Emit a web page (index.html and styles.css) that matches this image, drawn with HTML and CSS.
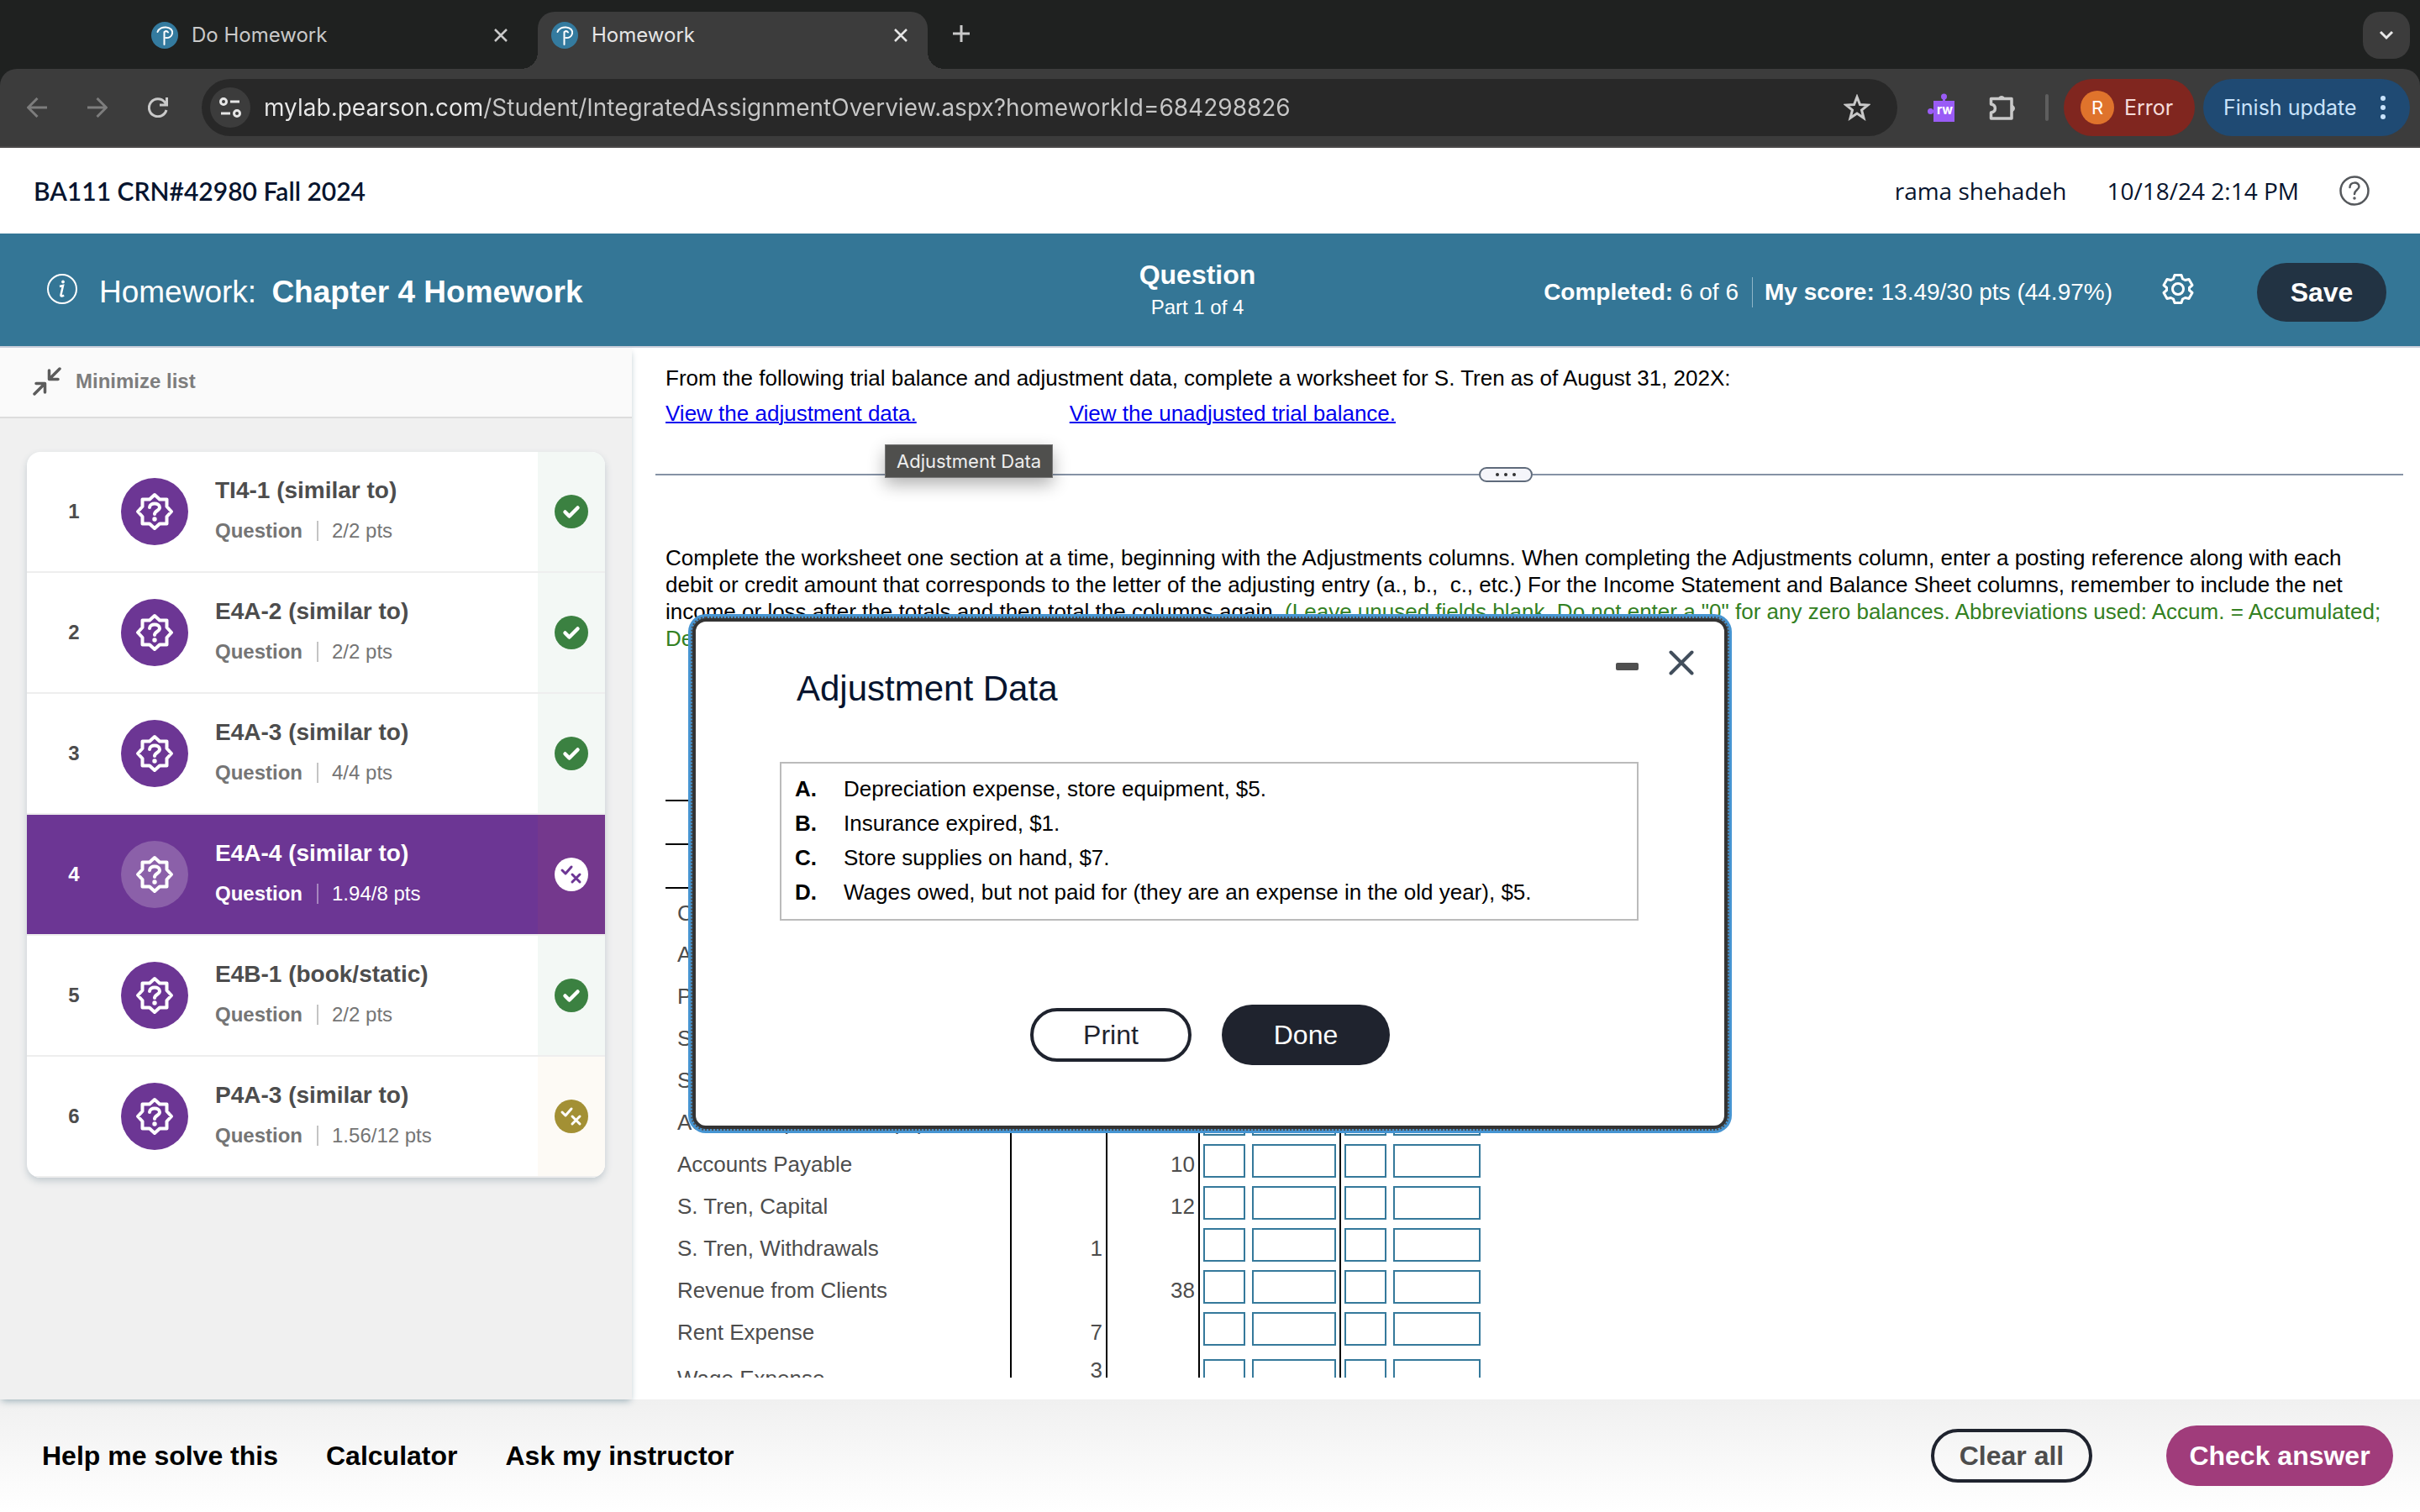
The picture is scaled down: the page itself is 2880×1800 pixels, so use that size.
FILE: index.html
```html
<!DOCTYPE html>
<html lang="en">
<head>
    <meta charset="UTF-8">
    <meta name="viewport" content="width=device-width, initial-scale=1.0">
    <title>Homework</title>
    <link rel="stylesheet" href="styles.css">
</head>
<body>

    <!-- Shared icons -->
    <svg class="sprite" aria-hidden="true">
        <symbol id="pearson" viewBox="0 0 32 32">
            <circle cx="16" cy="16" r="16" fill="#347b9f"/>
            <path d="M7.500 12C9 7.500 14 6 18 6.500C23 7 26 10 25 14C24 18 20.500 19.500 17.500 19M15.500 12V27M15.500 12C17 11 19 11 20 12.500" fill="none" stroke="#fff" stroke-width="2" stroke-linecap="round"/>
        </symbol>
        <symbol id="cross" viewBox="0 0 16 16">
            <path d="M1 1L15 15M15 1L1 15" fill="none" stroke="currentColor" stroke-width="2.500"/>
        </symbol>
        <symbol id="badge" viewBox="-24 -24 48 48">
            <path d="M0 -20L6 -14.500H14.500V-6L20 0L14.500 6V14.500H6L0 20L-6 14.500H-14.500V6L-20 0L-14.500 -6V-14.500H-6Z" fill="none" stroke="#fff" stroke-width="4" stroke-linejoin="round"/>
            <path d="M-6 -5C-6 -11 6 -11 6 -5C6 -1 0 -1 0 3" fill="none" stroke="#fff" stroke-width="4" stroke-linecap="round"/>
            <circle cx="0" cy="9" r="2.700" fill="#fff"/>
        </symbol>
        <symbol id="right" viewBox="0 0 40 40">
            <circle cx="20" cy="20" r="20" fill="#3b8141"/>
            <path d="M12.500 20.500L17.500 25.500L27.500 15.500" fill="none" stroke="#fff" stroke-width="4.500" stroke-linecap="round" stroke-linejoin="round"/>
        </symbol>
        <symbol id="partial" viewBox="0 0 40 40">
            <circle cx="20" cy="20" r="20" fill="var(--disc)"/>
            <path d="M9 15L13 19L20 11M21 20L30 29M30 20L21 29" fill="none" stroke="var(--mark)" stroke-width="3" stroke-linecap="round" stroke-linejoin="round"/>
        </symbol>
    </svg>

    <div class="browser">
        <!-- Browser tabs -->
        <div class="tabs">
            <div class="tab">
                <svg class="favicon"><use href="#pearson"/></svg>
                <span>Do Homework</span>
                <button class="icon-btn" aria-label="Close tab"><svg class="i16"><use href="#cross"/></svg></button>
            </div>
            <div class="tab active">
                <svg class="favicon"><use href="#pearson"/></svg>
                <span>Homework</span>
                <button class="icon-btn" aria-label="Close tab"><svg class="i16"><use href="#cross"/></svg></button>
            </div>
            <button class="icon-btn new-tab" aria-label="New tab">
                <svg width="22" height="22" viewBox="0 0 22 22"><path d="M11 1V21M1 11H21" stroke="#c9c9c9" stroke-width="3"/></svg>
            </button>
            <button class="icon-btn tab-search" aria-label="Search tabs">
                <svg width="18" height="12" viewBox="0 0 18 12"><path d="M2 2L9 9L16 2" fill="none" stroke="#e8e8e8" stroke-width="3"/></svg>
            </button>
        </div>

        <!-- Address bar -->
        <div class="toolbar">
            <button class="icon-btn dim" aria-label="Back">
                <svg width="24" height="24" viewBox="0 0 24 24"><path d="M24 12H2M12.500 1L1.500 12L12.500 23" fill="none" stroke="currentColor" stroke-width="3"/></svg>
            </button>
            <button class="icon-btn dim" aria-label="Forward">
                <svg width="24" height="24" viewBox="0 0 24 24"><path d="M0 12H22M11.500 1L22.500 12L11.500 23" fill="none" stroke="currentColor" stroke-width="3"/></svg>
            </button>
            <button class="icon-btn" aria-label="Reload">
                <svg width="24" height="24" viewBox="0 0 24 24"><path d="M22 15A10.500 10.500 0 1 1 20 5.500L22.500 8.500M22.500 0V9H14" fill="none" stroke="currentColor" stroke-width="3"/></svg>
            </button>
            <div class="address">
                <button class="icon-btn site-info" aria-label="Site information">
                    <svg width="26" height="24" viewBox="0 0 26 24" fill="none" stroke="currentColor" stroke-width="3"><circle cx="5" cy="5" r="3.500"/><path d="M13 5H24M2 19H13"/><circle cx="21" cy="19" r="3.500"/></svg>
                </button>
                <input type="text" class="url" aria-label="Address" value="mylab.pearson.com/Student/IntegratedAssignmentOverview.aspx?homeworkId=684298826">
                <button class="icon-btn" aria-label="Bookmark">
                    <svg width="32" height="32" viewBox="0 0 32 32"><path d="M16 3.500L19.500 12.500L29 13L21.500 19L24 28.500L16 23L8 28.500L10.500 19L3 13L12.500 12.500Z" fill="none" stroke="currentColor" stroke-width="3"/></svg>
                </button>
            </div>
            <button class="icon-btn ext-rw" aria-label="Read and write">
                <svg width="32" height="34" viewBox="0 0 32 34"><rect x="7" y="9" width="25" height="25" fill="#9a5cf6"/><circle cx="19.500" cy="4" r="3.500" fill="#9a5cf6"/><path d="M18 5H21V10H18ZM3 20H8V23H3Z" fill="#9a5cf6"/><circle cx="3.500" cy="21.500" r="3.500" fill="#9a5cf6"/><text x="11" y="25" class="rw">rw</text></svg>
            </button>
            <button class="icon-btn" aria-label="Extensions">
                <svg width="34" height="34" viewBox="0 0 34 34"><path d="M3.500 6.500H28V30H3.500V23C10 22 10 14 3.500 13Z" fill="none" stroke="currentColor" stroke-width="3.500" stroke-linejoin="round"/><path d="M12 6A4.500 4.500 0 0 1 20 6ZM29 14A4.500 4.500 0 0 1 29 22Z" fill="currentColor" stroke="currentColor"/></svg>
            </button>
            <span class="divider"></span>
            <button class="pill error"><span class="avatar">R</span>Error</button>
            <button class="pill update">Finish update
                <svg width="6" height="28" viewBox="0 0 6 28" fill="currentColor"><circle cx="3" cy="3" r="3"/><circle cx="3" cy="14" r="3"/><circle cx="3" cy="25" r="3"/></svg>
            </button>
        </div>
    </div>

    <!-- Course header -->
    <header class="course">
        <span class="course-name">BA111 CRN#42980 Fall 2024</span>
        <span class="user">rama shehadeh</span>
        <span>10/18/24 2:14 PM</span>
        <button class="icon-btn" aria-label="Help">
            <svg width="36" height="36" viewBox="0 0 36 36" fill="none" stroke="#55585c" stroke-width="2.500"><circle cx="18" cy="18" r="16.500"/><path d="M12.500 14C12.500 7 23.500 7 23.500 13C23.500 17 18 17 18 22" stroke-linecap="round"/><circle cx="18" cy="27" r="1" stroke-width="1.500"/></svg>
        </button>
    </header>

    <!-- Assignment bar -->
    <section class="assignment">
        <div class="assignment-title">
            <svg width="36" height="36" viewBox="0 0 36 36" fill="none" stroke="#fff" stroke-width="2"><circle cx="18" cy="18" r="17"/><path d="M15 15L19 14L16.500 25C16 27 18 27 20 25.500" stroke-width="2.500"/><circle cx="19" cy="9.500" r="1.500" fill="#fff" stroke-width="1"/></svg>
            <h1><span>Homework:</span> Chapter 4 Homework</h1>
        </div>
        <div class="part">
            <h2>Question</h2>
            <p>Part 1 of 4</p>
        </div>
        <div class="scores">
            <p><b>Completed:</b> 6 of 6</p>
            <p class="my-score"><b>My score:</b> 13.49/30 pts (44.97%)</p>
            <button class="icon-btn" aria-label="Settings">
                <svg width="38" height="38" viewBox="-19 -19 38 38" fill="none" stroke="#fff" stroke-width="3" stroke-linejoin="round"><path d="M-4 -16.500H4L5.500 -12L8.500 -10.500L13 -11.500L17 -4.500L13.500 -1.500V1.500L17 4.500L13 11.500L8.500 10.500L5.500 12L4 16.500H-4L-5.500 12L-8.500 10.500L-13 11.500L-17 4.500L-13.500 1.500V-1.500L-17 -4.500L-13 -11.500L-8.500 -10.500L-5.500 -12Z"/><circle r="6.500"/></svg>
            </button>
            <button class="save">Save</button>
        </div>
    </section>

    <main class="workspace">
        <aside class="sidebar">
            <button class="minimize">
                <svg width="34" height="34" viewBox="0 0 34 34" fill="none" stroke="#5c5c5c" stroke-width="3.500" stroke-linecap="round" stroke-linejoin="round"><path d="M32 2L20 14M19.500 4V14.500H30M2 32L14 20M4 19.500H14.500V30"/></svg>
                Minimize list
            </button>
            <ol class="questions" id="questions"></ol>
        </aside>

        <section class="content">
            <p>From the following trial balance and adjustment data, complete a worksheet for S. Tren as of August 31, 202X:</p>
            <div class="links">
                <a href="#">View the adjustment data.</a>
                <a href="#">View the unadjusted trial balance.</a>
                <span class="tooltip" role="tooltip">Adjustment Data</span>
            </div>
            <div class="splitter">
                <button aria-label="Resize"><i></i><i></i><i></i></button>
            </div>
            <div class="question-body">
                <p>Complete the worksheet one section at a time, beginning with the Adjustments columns. When completing the Adjustments column, enter a posting reference along with each debit or credit amount that corresponds to the letter of the adjusting entry (a., b.,&nbsp; c., etc.) For the Income Statement and Balance Sheet columns, remember to include the net income or loss after the totals and then total the columns again. <span class="hint">(Leave unused fields blank. Do not enter a "0" for any zero balances. Abbreviations used: Accum. = Accumulated; Depr. = Depreciation.)</span></p>
                <table class="worksheet">
                    <thead>
                        <tr><td colspan="5"></td></tr>
                        <tr><td colspan="5"></td></tr>
                        <tr><td colspan="5"></td></tr>
                    </thead>
                    <tbody id="accounts"></tbody>
                </table>
            </div>
        </section>
    </main>

    <footer class="actions">
        <button class="text-btn">Help me solve this</button>
        <button class="text-btn">Calculator</button>
        <button class="text-btn">Ask my instructor</button>
        <button class="clear">Clear all</button>
        <button class="check">Check answer</button>
    </footer>

    <!-- Adjustment data popup -->
    <dialog class="popup" open aria-labelledby="popupTitle">
        <div class="popup-head">
            <h2 id="popupTitle">Adjustment Data</h2>
            <button class="icon-btn" aria-label="Minimize"><span class="minus"></span></button>
            <button class="icon-btn" aria-label="Close">
                <svg width="30" height="30" viewBox="0 0 30 30"><path d="M2.500 2.500L27.500 27.500M27.500 2.500L2.500 27.500" stroke="#424e5c" stroke-width="4" stroke-linecap="round"/></svg>
            </button>
        </div>
        <ol class="adjustments">
            <li><b>A.</b>Depreciation expense, store equipment, $5.</li>
            <li><b>B.</b>Insurance expired, $1.</li>
            <li><b>C.</b>Store supplies on hand, $7.</li>
            <li><b>D.</b>Wages owed, but not paid for (they are an expense in the old year), $5.</li>
        </ol>
        <div class="popup-buttons">
            <button class="print">Print</button>
            <button class="done">Done</button>
        </div>
    </dialog>

    <script>
        const questions = [
            ["TI4-1 (similar to)", "2/2 pts", "right"],
            ["E4A-2 (similar to)", "2/2 pts", "right"],
            ["E4A-3 (similar to)", "4/4 pts", "right"],
            ["E4A-4 (similar to)", "1.94/8 pts", "partial", "current"],
            ["E4B-1 (book/static)", "2/2 pts", "right"],
            ["P4A-3 (similar to)", "1.56/12 pts", "partial"]
        ];

        document.getElementById("questions").innerHTML = questions.map(([title, pts, status, current], i) => `
            <li class="question ${current || ""}">
                <span class="number">${i + 1}</span>
                <span class="disc"><svg><use href="#badge"/></svg></span>
                <div class="info">
                    <h3>${title}</h3>
                    <p><b>Question</b><span>${pts}</span></p>
                </div>
                <span class="status ${status}"><svg><use href="#${status}"/></svg></span>
            </li>`).join("");

        // account name, debit, credit
        const accounts = [
            ["Cash", "", ""],
            ["Accounts Receivable", "", ""],
            ["Prepaid Insurance", "", ""],
            ["Store Supplies", "", ""],
            ["Store Equipment", "", ""],
            ["Accum. Depr, Store Equip", "", ""],
            ["Accounts Payable", "", "10"],
            ["S. Tren, Capital", "", "12"],
            ["S. Tren, Withdrawals", "1", ""],
            ["Revenue from Clients", "", "38"],
            ["Rent Expense", "7", ""],
            ["Wage Expense", "3", ""]
        ];

        document.getElementById("accounts").innerHTML = accounts.map(([name, dr, cr]) => `
            <tr>
                <th scope="row">${name}</th>
                <td class="amount">${dr}</td>
                <td class="amount">${cr}</td>
                <td class="entry"><div>
                    <input type="text" class="ref" aria-label="${name} debit reference">
                    <input type="text" aria-label="${name} debit">
                </div></td>
                <td class="entry"><div>
                    <input type="text" class="ref" aria-label="${name} credit reference">
                    <input type="text" class="wide" aria-label="${name} credit">
                </div></td>
            </tr>`).join("");
    </script>

</body>
</html>
```

FILE: styles.css
```css
* {
    box-sizing: border-box;
}
body {
    margin: 0;
    height: 100vh;
    display: flex;
    flex-direction: column;
    position: relative;
    overflow: hidden;
    background: #fff;
    color: #000;
    font-family: "Liberation Sans", Arial, sans-serif;
    font-size: 26px;
    line-height: 32px;
}
h1, h2, h3, p, ol {
    margin: 0;
    padding: 0;
}
ol {
    list-style: none;
}
button {
    font: inherit;
    border: none;
    background: none;
    padding: 0;
    color: inherit;
    cursor: pointer;
}
svg {
    display: block;
    flex: none;
}
.sprite {
    position: absolute;
    width: 0;
    height: 0;
}
.icon-btn {
    display: flex;
    align-items: center;
    justify-content: center;
    flex: none;
}

/* Browser tabs */
.browser {
    background: #1f2120;
    color: #c9c9c9;
    font-family: Inter, sans-serif;
}
.tabs {
    display: flex;
    align-items: flex-end;
    height: 82px;
    padding: 0 12px 0 164px;
    font-size: 24px;
}
.tab {
    display: flex;
    align-items: center;
    width: 464px;
    height: 68px;
    margin-right: 12px;
    padding: 0 24px 12px 16px;
    border-radius: 20px 20px 0 0;
}
.tab span {
    flex: 1;
    padding-left: 16px;
}
.tab.active {
    position: relative;
    background: #3c3c3c;
    color: #e6e6e6;
}
.tab.active::before, .tab.active::after {
    content: "";
    position: absolute;
    bottom: 0;
    width: 20px;
    height: 20px;
}
.tab.active::before {
    left: -20px;
    background: radial-gradient(circle at 0 0, transparent 20px, #3c3c3c 20px);
}
.tab.active::after {
    right: -20px;
    background: radial-gradient(circle at 100% 0, transparent 20px, #3c3c3c 20px);
}
.favicon {
    width: 32px;
    height: 32px;
}
.i16 {
    width: 16px;
    height: 16px;
}
.new-tab {
    height: 68px;
    padding: 0 0 16px 17px;
}
.tab-search {
    width: 56px;
    height: 56px;
    margin: 0 0 12px auto;
    border-radius: 20px;
    background: #3c3c3c;
}

/* Address bar */
.toolbar {
    display: flex;
    align-items: center;
    height: 94px;
    padding: 0 12px 0 32px;
    background: #3c3c3c;
    border-bottom: 2px solid #4a4848;
    border-radius: 20px 20px 0 0;
    font-size: 25px;
}
.toolbar > .icon-btn {
    margin-right: 48px;
}
.toolbar > .icon-btn.ext-rw {
    margin: 0 40px 0 36px;
}
.toolbar > .icon-btn.ext-rw + .icon-btn {
    margin-right: 34px;
}
.dim {
    color: #7d7d7d;
}
.address {
    display: flex;
    align-items: center;
    flex: 1;
    height: 68px;
    margin-left: -8px;
    padding: 0 32px 0 10px;
    border-radius: 34px;
    background: #282828;
}
.site-info {
    width: 48px;
    height: 48px;
    border-radius: 50%;
    background: #3c3c3c;
    color: #e6e6e6;
}
.url {
    flex: 1;
    margin: 0 16px;
    padding: 0;
    border: none;
    outline: none;
    font-family: Inter, sans-serif;
    font-size: 28px;
    line-height: 40px;
    color: transparent;
    background: linear-gradient(90deg, #e8e8e8 262px, #c7c7c7 262px);
    background-clip: text;
}
.rw {
    font: bold 15px Inter, sans-serif;
    fill: #fff;
}
.divider {
    width: 4px;
    height: 32px;
    margin-right: 18px;
    border-radius: 2px;
    background: #5e5e5e;
}
.pill {
    display: flex;
    align-items: center;
    height: 68px;
    border-radius: 34px;
    white-space: nowrap;
}
.error {
    width: 156px;
    margin-right: 10px;
    padding-left: 20px;
    background: #80261f;
    color: #f5dcda;
}
.avatar {
    width: 40px;
    height: 40px;
    margin-right: 12px;
    border-radius: 50%;
    background: #df732c;
    color: #fff;
    font-size: 22px;
    line-height: 40px;
}
.update {
    justify-content: space-between;
    width: 246px;
    padding: 0 29px 0 24px;
    background: #1f4a73;
    color: #c9e3fb;
}

/* Course header */
.course {
    display: flex;
    align-items: center;
    gap: 48px;
    height: 102px;
    padding: 0 60px 0 40px;
    color: #07142e;
    font-family: "Open Sans", sans-serif;
    font-size: 28px;
}
.course-name {
    margin-right: auto;
    font-family: Lato, sans-serif;
    font-weight: 600;
    font-size: 30px;
}

/* Assignment bar */
.assignment {
    display: grid;
    grid-template-columns: 1fr auto 1fr;
    align-items: center;
    height: 136px;
    padding: 6px 40px 0 56px;
    background: #347696;
    border-bottom: 2px solid #cbcfdb;
    color: #fff;
}
.assignment svg {
    margin-bottom: 8px;
}
.assignment-title {
    display: flex;
    align-items: center;
    gap: 26px;
}
.assignment h1 {
    font-size: 37px;
    line-height: 44px;
}
.assignment h1 span {
    margin-right: 8px;
    font-weight: normal;
}
.part {
    margin-right: 46px;
    text-align: center;
}
.part h2 {
    margin-bottom: 4px;
    font-size: 32px;
    line-height: 38px;
}
.part p {
    margin-bottom: 6px;
    font-size: 24px;
}
.scores {
    display: flex;
    align-items: center;
    justify-content: flex-end;
    font-size: 28px;
    line-height: 36px;
}
.my-score {
    margin: 0 59px 0 16px;
    padding-left: 14px;
    border-left: 1px solid #8fb5c8;
}
.save {
    width: 154px;
    height: 70px;
    margin-left: 75px;
    border-radius: 35px;
    background: #223343;
    font-size: 32px;
    font-weight: bold;
}

/* Question list */
.workspace {
    display: flex;
    flex: 1;
    min-height: 0;
}
.sidebar {
    flex: none;
    width: 752px;
    background: #f0f0f0;
    box-shadow: 0 4px 8px -2px #9fb2ba;
    z-index: 1;
}
.minimize {
    display: flex;
    align-items: center;
    gap: 17px;
    width: 100%;
    height: 84px;
    padding: 0 39px 2px;
    background: #fafafa;
    border-bottom: 2px solid #ddd;
    color: #7d7d7d;
    font-size: 24px;
    font-weight: bold;
}
.questions {
    margin: 40px 32px;
    border-radius: 16px;
    overflow: hidden;
    background: #fff;
    box-shadow: 0 4px 8px #c3cbd0;
}
.question {
    display: flex;
    align-items: center;
    height: 144px;
    border-bottom: 2px solid #eee;
    color: #4d4d4d;
}
.number {
    width: 112px;
    text-align: center;
    font-size: 24px;
    font-weight: bold;
}
.disc {
    display: grid;
    place-items: center;
    width: 80px;
    height: 80px;
    border-radius: 50%;
    background: #6c3694;
}
.disc svg {
    width: 48px;
    height: 48px;
}
.info {
    flex: 1;
    padding-left: 32px;
}
.info h3 {
    margin-bottom: 20px;
    font-size: 28px;
}
.info p {
    display: flex;
    font-size: 24px;
    line-height: 24px;
    margin-bottom: 6px;
    color: #757575;
}
.info p span {
    margin-left: 17px;
    padding-left: 16px;
    border-left: 2px solid #c4c4c4;
}
.status {
    display: grid;
    place-items: center;
    width: 80px;
    height: 100%;
    background: #f3f8f5;
}
.status svg {
    width: 40px;
    height: 40px;
}
.status.partial {
    --disc: #a39034;
    --mark: #fff;
    background: #fdfaf5;
}
.current, .current .info p {
    color: #fff;
}
.current {
    background: #6c3694;
    background-clip: padding-box;
}
.current .disc {
    background: #8b60a9;
}
.current .info p span {
    border-color: #a786bf;
}
.current .status {
    --disc: #fff;
    --mark: #6c3694;
    background: #74388d;
}

/* Question content */
.content {
    flex: 1;
    min-width: 0;
    padding: 20px 20px 26px 28px;
    display: flex;
    flex-direction: column;
}
.content > p {
    padding: 0 12px;
}
.links {
    display: flex;
    gap: 182px;
    position: relative;
    padding: 10px 12px 0;
}
.links a {
    color: #00e;
    text-decoration-thickness: 2px;
}
.tooltip {
    position: absolute;
    left: 273px;
    top: 63px;
    z-index: 1;
    padding: 4px 13px;
    background: #4f4f4d;
    border: 1px solid #777;
    color: #eee;
    font-family: Inter, sans-serif;
    font-size: 22px;
    line-height: 30px;
    white-space: nowrap;
    box-shadow: 0 8px 20px rgba(0, 0, 0, .3);
}
.splitter {
    display: flex;
    align-items: center;
    margin-top: 48px;
}
.splitter::before, .splitter::after {
    content: "";
    height: 2px;
    background: #8592a5;
}
.splitter::before {
    width: 980px;
}
.splitter::after {
    flex: 1;
}
.splitter button {
    display: flex;
    align-items: center;
    justify-content: center;
    gap: 6px;
    width: 64px;
    height: 18px;
    border: 2px solid #5f6b7b;
    border-radius: 9px;
    background: #f5f5fa;
}
.splitter i {
    width: 4px;
    height: 4px;
    border-radius: 2px;
    background: #333;
}
.question-body {
    flex: 1;
    min-height: 0;
    overflow: hidden;
    padding: 74px 16px 0 12px;
}
.hint {
    color: #338022;
}
.worksheet {
    margin-top: 125px;
    border-collapse: collapse;
    color: #4d4d4d;
}
.worksheet thead td {
    height: 52px;
    border-bottom: 2px solid #000;
}
.worksheet th, .worksheet td {
    padding: 0;
}
.worksheet tbody tr {
    height: 50px;
}
.worksheet th {
    width: 411px;
    padding: 8px 0 0 14px;
    text-align: left;
    font-weight: normal;
}
.amount {
    width: 114px;
    border-left: 2px solid #000;
    text-align: right;
}
.worksheet td.amount {
    padding: 8px 4px 0 0;
}
.amount + .amount {
    width: 110px;
}
.entry {
    border-left: 2px solid #000;
}
.worksheet td.entry {
    padding: 0 4px;
}
.entry div {
    display: flex;
    gap: 8px;
}
.entry input {
    width: 100px;
    height: 40px;
    padding: 0 6px;
    border: 2px solid #35799b;
    border-radius: 0;
    font: inherit;
    text-align: right;
}
.entry .ref {
    width: 50px;
}
.entry .wide {
    width: 104px;
}
.worksheet tbody tr:last-child th {
    padding: 18px 0 12px 14px;
}
.worksheet tr:last-child .amount {
    vertical-align: top;
}

/* Bottom actions */
.actions {
    display: flex;
    align-items: center;
    height: 134px;
    padding: 0 32px 0 50px;
    background: linear-gradient(#f0f0f0, #fff);
    font-size: 32px;
    font-weight: bold;
}
.text-btn {
    margin-right: 57px;
}
.clear {
    width: 192px;
    height: 64px;
    margin-left: auto;
    border: 4px solid #1f232e;
    border-radius: 32px;
    color: #4d4d4d;
}
.check {
    width: 270px;
    height: 72px;
    margin-left: 88px;
    border-radius: 36px;
    background: #a03c7b;
    color: #fff;
}

/* Popup */
.popup {
    position: absolute;
    top: 736px;
    left: 0;
    right: 0;
    z-index: 2;
    width: 1232px;
    margin: 0 auto;
    padding: 34px 0 72px;
    border: 4px solid #333;
    border-radius: 16px;
    outline: 2px dotted #4d4d4d;
    box-shadow: 0 0 0 5px #4694d1;
    background: #fff;
    color: #000;
}
.popup-head {
    display: flex;
    align-items: flex-start;
    gap: 36px;
    padding: 0 36px 0 120px;
}
.popup h2 {
    margin-right: auto;
    padding-top: 22px;
    color: #07142e;
    font-size: 42px;
    font-weight: normal;
    line-height: 48px;
}
.minus {
    width: 27px;
    height: 9px;
    margin-top: 15px;
    border-radius: 2px;
    background: #4f4f4f;
}
.adjustments {
    width: 1022px;
    margin: 63px 0 0 100px;
    padding: 10px 16px 11px;
    border: 2px solid #bbb;
}
.adjustments li {
    display: flex;
    line-height: 41px;
}
.adjustments b {
    width: 58px;
}
.popup-buttons {
    display: flex;
    align-items: center;
    justify-content: center;
    gap: 36px;
    margin-top: 100px;
    font-size: 32px;
}
.print, .done {
    border-radius: 36px;
}
.print {
    width: 192px;
    height: 64px;
    border: 4px solid #1f232e;
    color: #1f232e;
}
.done {
    width: 200px;
    height: 72px;
    background: #1f232e;
    color: #fff;
}
```
